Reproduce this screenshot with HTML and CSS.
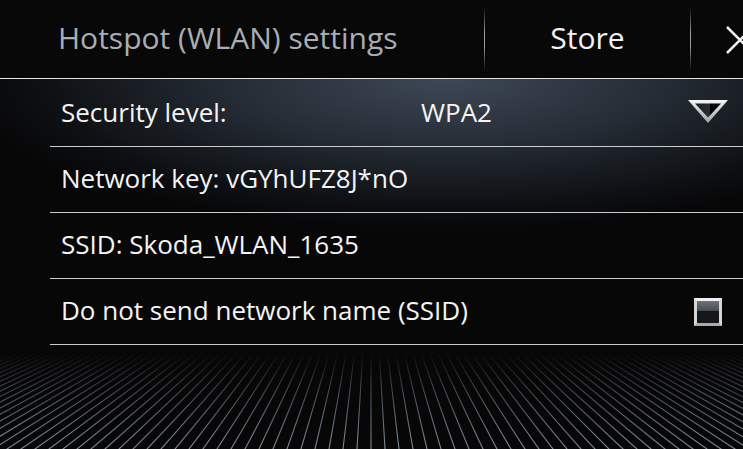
FILE: index.html
```html
<!DOCTYPE html>
<html lang="en">
<head>
    <meta charset="UTF-8">
    <title>Hotspot (WLAN) settings</title>
    <link rel="stylesheet" href="styles.css">
</head>
<body>
    <div class="screen">
        <div class="topbar">
            <div class="title">Hotspot (WLAN) settings</div>
            <div class="divider"></div>
            <div class="store">Store</div>
            <div class="divider"></div>
            <div class="close">
                <svg width="28" height="28" viewBox="0 0 28 28">
                    <path d="M1 1 L27 27 M27 1 L1 27" stroke="#f2f2f2" stroke-width="2.6" fill="none"/>
                </svg>
            </div>
        </div>
        <div class="panel">
            <div class="row">
                <span class="label">Security level:</span>
                <span class="value">WPA2</span>
                <svg class="drop" width="40" height="25" viewBox="0 0 40 25">
                    <defs>
                        <linearGradient id="rim" x1="0" y1="0" x2="0" y2="1">
                            <stop offset="0" stop-color="#f4f5f6"/>
                            <stop offset="1" stop-color="#9ea2a8"/>
                        </linearGradient>
                        <linearGradient id="hole" x1="0" y1="0" x2="1" y2="0">
                            <stop offset="0" stop-color="#1b1e23"/>
                            <stop offset="0.55" stop-color="#2a2e35"/>
                            <stop offset="0.6" stop-color="#020203"/>
                            <stop offset="1" stop-color="#000"/>
                        </linearGradient>
                    </defs>
                    <polygon points="0,1 40,1 20,24" fill="url(#rim)"/>
                    <polygon points="7,4.5 33,4.5 20,18.5" fill="url(#hole)"/>
                </svg>
            </div>
            <div class="row">
                <span class="label">Network key: vGYhUFZ8J*nO</span>
            </div>
            <div class="row">
                <span class="label">SSID: Skoda_WLAN_1635</span>
            </div>
            <div class="row">
                <span class="label">Do not send network name (SSID)</span>
                <span class="check"><span class="check-top"></span></span>
            </div>
        </div>
        <div class="floor">
            <svg id="floorLines" width="743" height="110" viewBox="0 0 743 110">
                <defs>
                    <linearGradient id="fade" x1="0" y1="0" x2="0" y2="110" gradientUnits="userSpaceOnUse">
                        <stop offset="0.07" stop-color="#fff" stop-opacity="0"/>
                        <stop offset="0.4" stop-color="#fff" stop-opacity="0.45"/>
                        <stop offset="1" stop-color="#fff" stop-opacity="1"/>
                    </linearGradient>
                    <mask id="floorMask">
                        <rect x="0" y="0" width="743" height="110" fill="url(#fade)"/>
                    </mask>
                </defs>
                <g id="rays" mask="url(#floorMask)" stroke="#8793a3" stroke-width="1.1"></g>
            </svg>
        </div>
    </div>
    <script>
        // perspective floor: rays from a vanishing point above the list
        var rays = document.getElementById('rays');
        var vx = 371, vy = -134, bottom = 104, step = 14;
        for (var k = -70; k <= 70; k++) {
            var line = document.createElementNS('http://www.w3.org/2000/svg', 'line');
            line.setAttribute('x1', vx);
            line.setAttribute('y1', vy);
            line.setAttribute('x2', vx + k * step * 1.05);
            line.setAttribute('y2', bottom + (bottom - vy) * 0.05);
            rays.appendChild(line);
        }
    </script>
</body>
</html>
```

FILE: styles.css
```css
html, body { margin: 0; padding: 0; }
body { background-color: #070708; font-family: "Open Sans", "Noto Sans", sans-serif; }
.screen { width: 743px; height: 449px; overflow: hidden; display: flex; flex-direction: column; background-color: #070708; }

.topbar { height: 78px; flex: none; display: flex; align-items: center; border-bottom: 1px solid #e2e4e6; background-color: #080809; }
.title { width: 484px; flex: none; box-sizing: border-box; padding-left: 58px; padding-bottom: 3px; font-size: 30px; color: #a9aeb4; white-space: nowrap; }
.divider { width: 1px; flex: none; height: 64px; background: linear-gradient(to bottom, rgba(200,204,208,0), #9a9fa6 40%, #9a9fa6 60%, rgba(200,204,208,0)); }
.store { width: 205px; flex: none; text-align: center; padding-bottom: 3px; font-size: 30px; color: #f2f2f2; }
.close { flex: 1; padding-left: 35px; height: 28px; margin-top: 1px; overflow: hidden; }
.close svg { display: block; }

.panel { flex: none; padding-top: 2px; background: radial-gradient(ellipse 480px 150px at 60% 0, #3e4756 0%, #252c35 45%, #0d0f12 85%, #070708 100%); }
.row { height: 65px; box-sizing: border-box; padding-bottom: 3px; margin-left: 50px; display: flex; align-items: center; border-bottom: 1px solid #c9cdd1; color: #f4f4f4; font-size: 26px; }
.row { height: 66px; }
.label { padding-left: 11px; white-space: nowrap; }
.row:nth-child(1) .label { width: 360px; }
.value { flex: 1; }
.drop { margin-right: 15px; margin-top: -1px; }
.row:nth-child(4) .label { flex: 1; }

.check { width: 22px; height: 22px; margin-right: 21px; margin-top: 3px; border: 3px solid #d3d6da; border-top-color: #eef0f2; border-bottom-color: #a7abb1; background-color: #15171b; display: flex; flex-direction: column; }
.check-top { height: 10px; background: linear-gradient(to bottom, #6e737c, #474b53); }

.floor { flex: 1; position: relative; }
.floor svg { display: block; }
```
